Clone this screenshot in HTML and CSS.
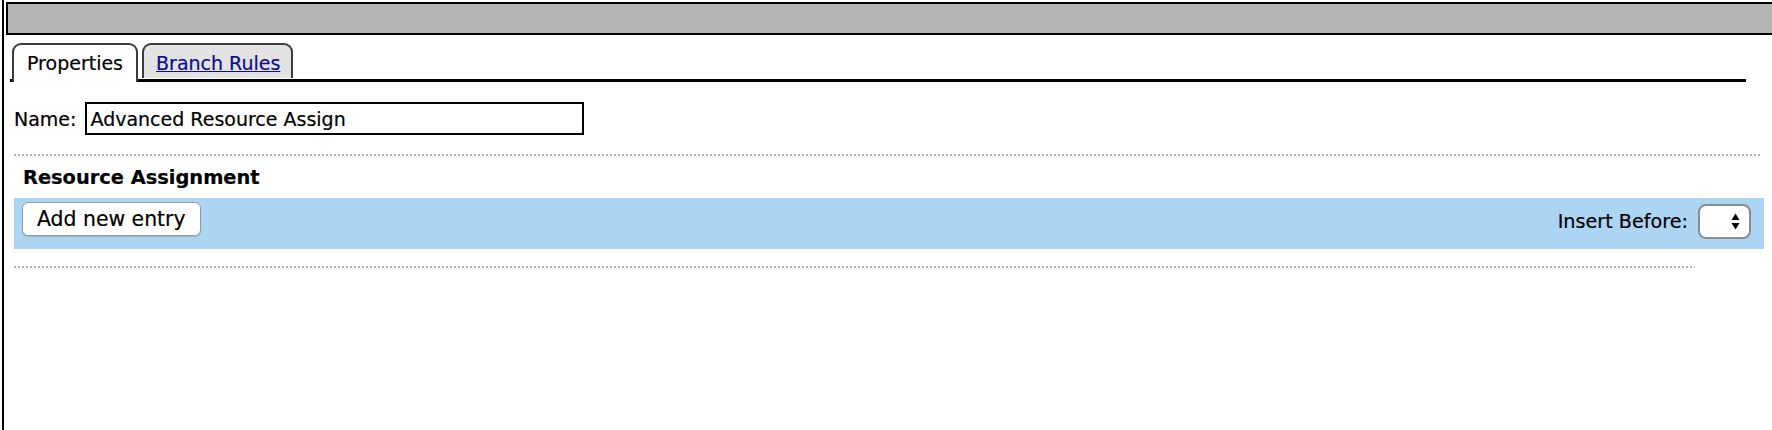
FILE: index.html
```html
<!DOCTYPE html>
<html>
<head>
<meta charset="utf-8">
<title>Properties</title>
<link rel="stylesheet" href="styles.css">
</head>
<body>
<div class="frame">
  <div class="header"></div>
  <div class="content">
    <div class="tabbar">
      <div class="tab tab-active">Properties</div>
      <div class="tab tab-inactive"><a href="#" class="tab-link">Branch Rules</a></div>
    </div>
    <div class="panel">
      <div class="name-row">
        <label class="name-label" for="nm">Name:</label>
        <input id="nm" class="name-input" type="text" value="Advanced Resource Assign">
      </div>
      <div class="dots dots-wide"></div>
      <div class="section-title">Resource Assignment</div>
      <div class="toolbar">
        <button class="btn">Add new entry</button>
        <div class="insert">
          <span class="insert-label">Insert Before:</span>
          <div class="select">
            <svg class="arrows" width="9" height="17" viewBox="0 0 9 17">
              <polygon points="4.5,0.5 8.5,7 0.5,7" fill="#000"/>
              <polygon points="0.5,10 8.5,10 4.5,16.5" fill="#000"/>
            </svg>
          </div>
        </div>
      </div>
      <div class="dots dots-short"></div>
    </div>
  </div>
</div>
</body>
</html>
```
FILE: styles.css
```css
html, body {
  margin: 0;
  padding: 0;
  background: #fff;
  overflow: hidden;
}
body {
  font-family: "DejaVu Sans", Verdana, sans-serif;
  font-size: 19px;
  color: #000;
  -webkit-text-stroke: 0.2px currentColor;
}
.frame {
  margin-left: 2px;
  border-left: 2px solid #000;
  padding: 2px 0 0 2px;
  height: 430px;
  box-sizing: border-box;
}
.header {
  height: 29px;
  border: 2px solid #000;
  background: #b3b3b3;
  margin-right: -4px;
}
.content {
  padding: 8px 0 0 4px;
}
.tabbar {
  display: flex;
  align-items: flex-start;
  gap: 4px;
  height: 36px;
  padding-left: 2px;
  margin-right: 26px;
  border-bottom: 3px solid #000;
  border-image: linear-gradient(to bottom, #8a8a8a 0, #8a8a8a 33%, #000 33%, #000 100%) 0 0 1 0 / 0 0 3px 0;
}
.tab {
  box-sizing: border-box;
  border: 2px solid #3c3c3c;
  border-bottom: none;
  border-radius: 9px 9px 0 0;
  line-height: 22px;
  white-space: nowrap;
}
.tab-active {
  height: 39px;
  margin-bottom: -3px;
  padding: 7px 13px 0 13px;
  background: #fff;
  position: relative;
}
.tab-inactive {
  height: 35px;
  padding: 7px 11px 0 12px;
  background: #e2e2e2;
}
.tab-link {
  color: #0c0c8c;
  text-decoration: underline;
}
.panel {
  margin: 0 8px 0 4px;
}
.name-row {
  display: flex;
  align-items: center;
  gap: 9px;
  margin-top: 20px;
}
.name-input {
  box-sizing: border-box;
  width: 499px;
  height: 33px;
  border: 2px solid #000;
  padding: 0 3px;
  margin: 0;
  font-family: "DejaVu Sans", Verdana, sans-serif;
  font-size: 19px;
  color: #000;
  background: #fff;
  outline: none;
  -webkit-text-stroke: 0.2px #000;
}
.dots {
  height: 2px;
  background: repeating-linear-gradient(to right, #b4b4b4 0, #b4b4b4 2px, transparent 2px, transparent 4px);
}
.dots-wide {
  margin-top: 19px;
  margin-right: 4px;
}
.dots-short {
  margin-top: 17px;
  margin-right: 69px;
}
.section-title {
  margin-top: 10px;
  padding-left: 9px;
  font-weight: bold;
  font-size: 19.4px;
  line-height: 24px;
}
.toolbar {
  margin-top: 8px;
  height: 51px;
  box-sizing: border-box;
  background: #acd5f3;
  display: flex;
  align-items: flex-start;
  justify-content: space-between;
  padding: 4px 13px 0 8px;
}
.btn {
  box-sizing: border-box;
  height: 34px;
  padding: 0 14px;
  margin: 0;
  border: 1px solid #9a9a9a;
  border-radius: 6px;
  background: #fff;
  box-shadow: 0 1px 1px rgba(0,0,0,0.15);
  font-family: "DejaVu Sans", Verdana, sans-serif;
  font-size: 20.4px;
  color: #000;
  line-height: 32px;
  -webkit-text-stroke: 0.2px #000;
}
.insert {
  display: flex;
  align-items: center;
  gap: 10px;
  margin-top: 2px;
}
.insert-label {
  font-size: 19.2px;
  line-height: 22px;
}
.select {
  box-sizing: border-box;
  width: 53px;
  height: 35px;
  border: 2px solid #8c8c8c;
  border-radius: 8px;
  background: #fff;
  display: flex;
  align-items: center;
  justify-content: flex-end;
  padding-right: 9px;
}
.arrows {
  display: block;
}
```
